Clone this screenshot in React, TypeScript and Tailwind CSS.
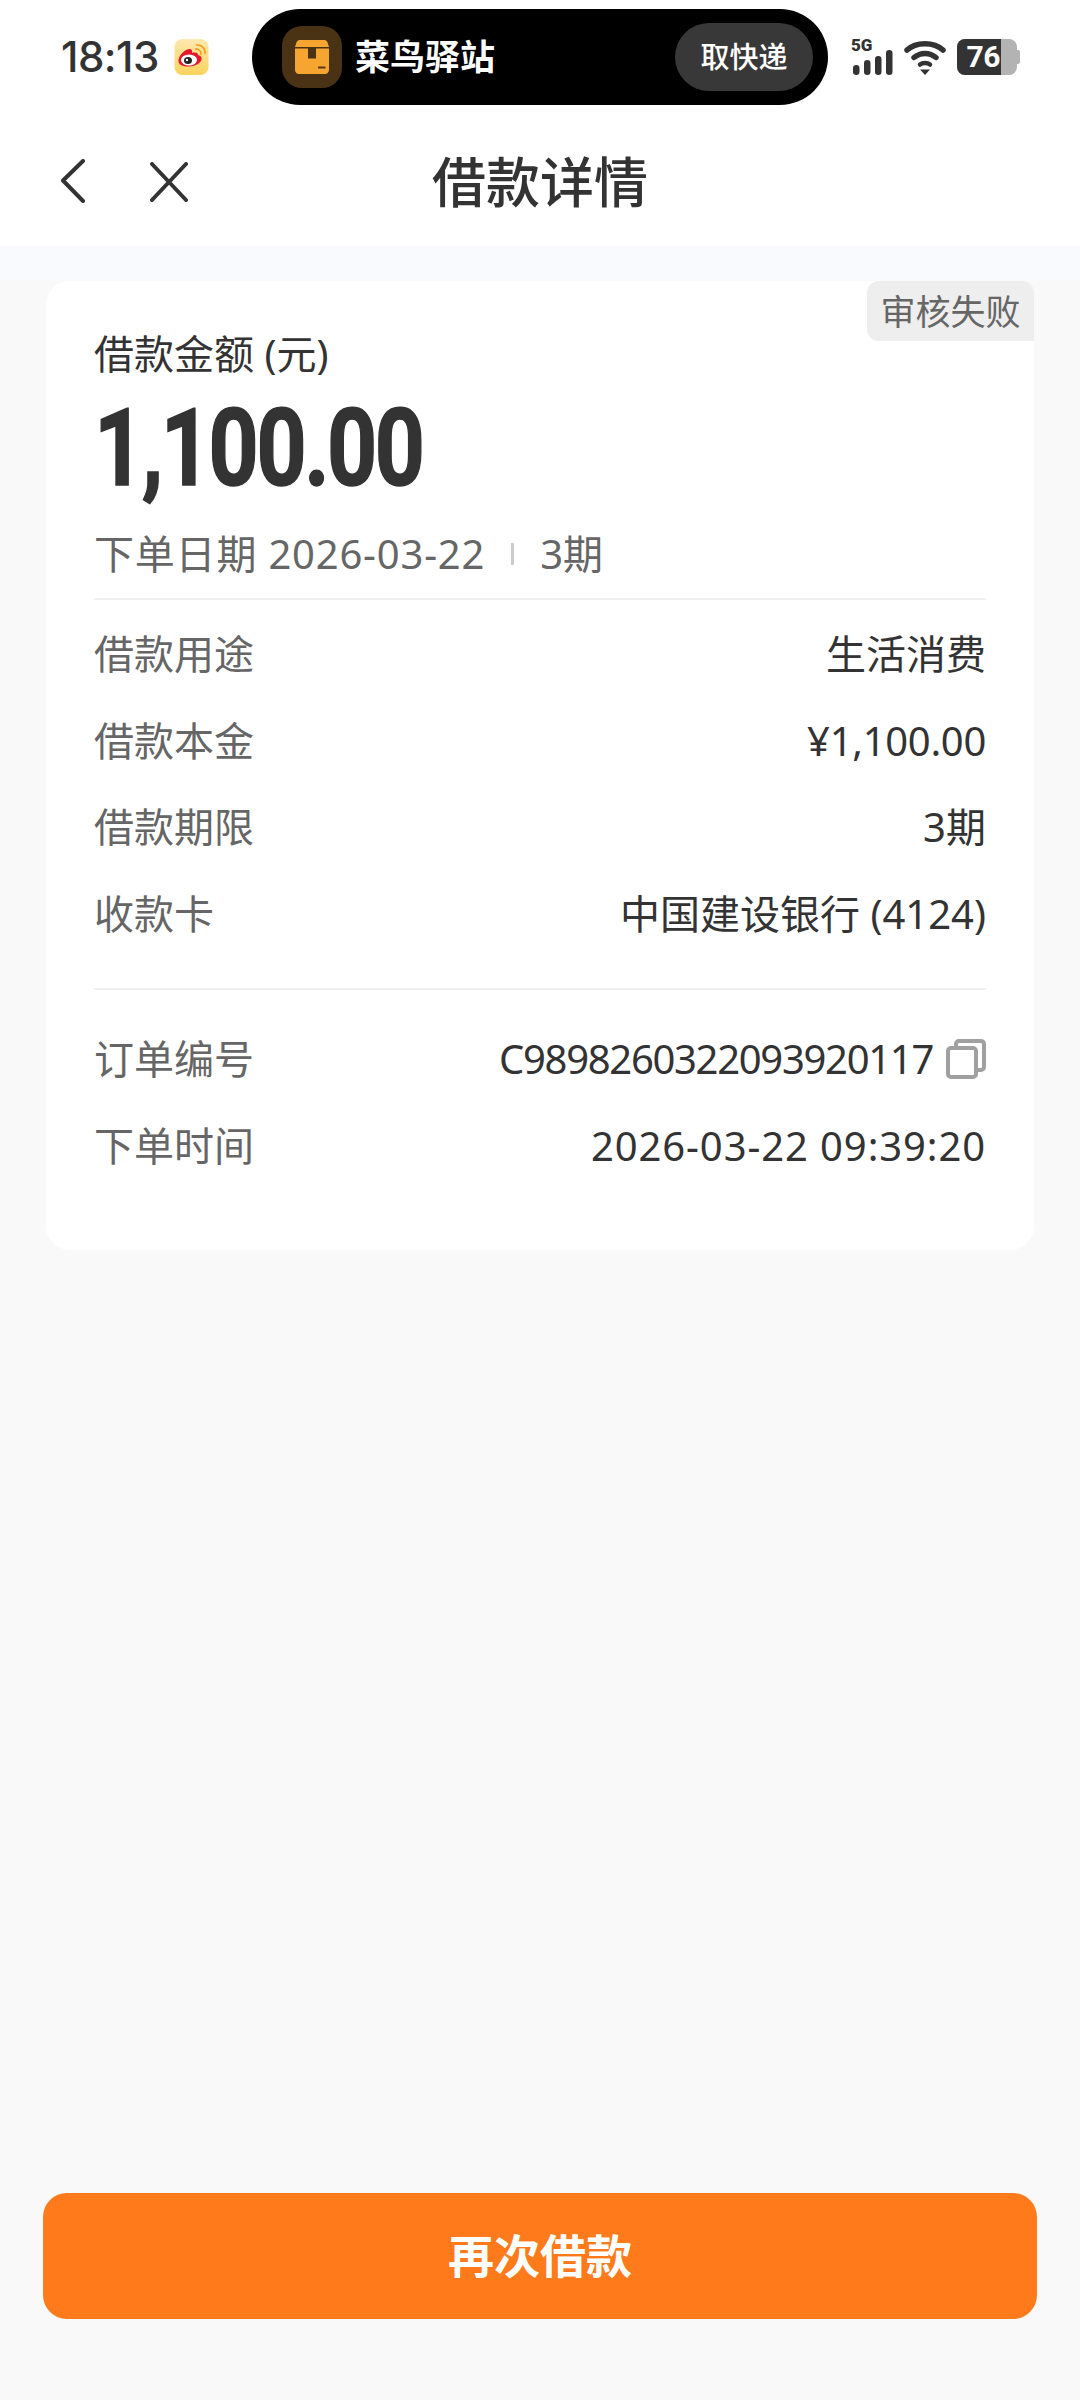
const FONT = "font-['Noto_Sans','Noto_Sans_CJK_SC',sans-serif]";

const ROWS_TOP = [
  { label: '借款用途', value: '生活消费', tracking: '' },
  { label: '借款本金', value: '¥1,100.00', tracking: 'tracking-[-0.3px]' },
  { label: '借款期限', value: '3期', tracking: '' },
  { label: '收款卡', value: '中国建设银行 (4124)', tracking: '' },
];

function WeiboIcon() {
  return (
    <svg viewBox="0 0 34 36" className="w-[35px] h-[36px]">
      <defs>
        <linearGradient id="wb" x1="0" y1="0" x2="0" y2="1">
          <stop offset="0" stopColor="#fde9b0" />
          <stop offset="1" stopColor="#fdd35c" />
        </linearGradient>
      </defs>
      <rect width="34" height="36" rx="8" fill="url(#wb)" />
      <path d="M4 22c0-6 7-12 11-12 2.500 0 3 2 2.500 4 3-1 6-.5 6 2 3 .5 4 2.500 3.500 4.500-1 4-6.500 7-12.500 7C8.500 27.500 4 26 4 22z" fill="#e6162d" />
      <ellipse cx="14.500" cy="21" rx="8" ry="5.500" fill="#fff" />
      <ellipse cx="13.500" cy="21.500" rx="4" ry="3.500" fill="#222" />
      <circle cx="12.500" cy="21" r="1.200" fill="#fff" />
      <path d="M21 10c3-.5 6 2 5.500 5.500M22 6c5-.5 9 3.500 8.500 8.500" fill="none" stroke="#f0a020" strokeWidth="1.600" strokeLinecap="round" />
    </svg>
  );
}

function ParcelIcon() {
  return (
    <svg viewBox="0 0 34 34" className="w-[34px] h-[34px]">
      <path d="M4.500 0h25c1.500 0 2.500 1 3 2.500L34 7H0l1.500-4.500C2 1 3 0 4.500 0z" fill="#f7a531" />
      <path d="M0 8.500h13V18.500h8V8.500h13V30c0 2.200-1.800 4-4 4H4c-2.200 0-4-1.800-4-4z" fill="#f7a531" />
      <rect x="23" y="26.500" width="7.500" height="2" fill="#5a3a10" />
    </svg>
  );
}

function SignalIcon() {
  return (
    <div className="relative w-[42px] h-[36px]">
      <span className="absolute left-0 top-[-3px] text-[17px] leading-[18px] font-black text-[#333] font-['Roboto',sans-serif]">5G</span>
      <svg viewBox="0 0 42 36" className="absolute inset-0 w-[42px] h-[36px]">
        <rect x="2" y="26" width="6.500" height="10" rx="3.200" fill="#333" />
        <rect x="13" y="21" width="6.500" height="15" rx="3.200" fill="#333" />
        <rect x="24" y="17" width="6.500" height="19" rx="3.200" fill="#333" />
        <rect x="35" y="11" width="6.500" height="25" rx="3.200" fill="#333" />
      </svg>
    </div>
  );
}

function WifiIcon() {
  return (
    <svg viewBox="0 0 42 36" className="w-[44px] h-[36px]">
      <path d="M3 11C12 2.500 30 2.500 39 11" fill="none" stroke="#333" strokeWidth="5.500" strokeLinecap="round" />
      <path d="M10 18.500C16.500 13 25.500 13 32 18.500" fill="none" stroke="#333" strokeWidth="5.500" strokeLinecap="round" />
      <path d="M16 25.500C18.500 23.500 23.500 23.500 26 25.500" fill="none" stroke="#333" strokeWidth="4.500" strokeLinecap="round" />
      <path d="M16 30.500h10L21 36z" fill="#333" />
    </svg>
  );
}

function Battery() {
  return (
    <div className="flex items-center">
      <div className="relative flex w-[60px] h-[36px] rounded-[8px] overflow-hidden bg-[#b3b3b3]">
        <div className="w-[44px] h-full bg-[#333] flex items-center justify-end pr-[1px]">
          <span className="text-[30px] leading-none font-bold text-white font-['Roboto',sans-serif] tracking-[-0.5px]">76</span>
        </div>
      </div>
      <div className="w-[3px] h-[14px] rounded-r-[2px] bg-[#b3b3b3]" />
    </div>
  );
}

function CopyIcon() {
  return (
    <svg viewBox="0 0 40 40" className="w-[40px] h-[40px]" fill="none" stroke="#a0a0a0" strokeWidth="4">
      <rect x="2" y="9" width="28" height="29" rx="3" />
      <path d="M10 8V5c0-1.700 1.300-3 3-3h22c1.700 0 3 1.300 3 3v23c0 1.700-1.300 3-3 3h-4" />
    </svg>
  );
}

function Row({ label, value, tracking, icon }: { label: string; value: string; tracking?: string; icon?: boolean }) {
  return (
    <div className="h-[86.500px] flex items-center justify-between">
      <span className="text-[40px] text-[#666]">{label}</span>
      <div className="flex items-center gap-[13px]">
        <span className={`text-[40px] text-[#333] ${tracking ?? ''}`}>{value}</span>
        {icon && <CopyIcon />}
      </div>
    </div>
  );
}

export default function App() {
  return (
    <div className={`${FONT} w-[1080px] min-h-[2400px] bg-[#f9f9f9] flex flex-col`}>
      {/* status bar + nav */}
      <div className="bg-white h-[246px]">
        <div className="h-[113px] flex items-center pl-[61px] pt-[1px]">
          <span className="w-[96px] text-[42px] leading-none font-medium text-[#333] tracking-[-0.5px] font-['Inter',sans-serif]">18:13</span>
          <div className="ml-[17px]"><WeiboIcon /></div>
          <div className="ml-[43px] w-[576px] h-[96px] rounded-[48px] bg-black flex items-center pl-[30px] pr-[15px]">
            <div className="w-[60px] h-[62px] rounded-[20px] bg-[#4a3214] flex items-center justify-center">
              <ParcelIcon />
            </div>
            <span className="ml-[13px] text-[35px] font-bold text-white">菜鸟驿站</span>
            <div className="ml-auto w-[138px] h-[68px] rounded-[34px] bg-[#383838] flex items-center justify-center">
              <span className="text-[29px] font-medium text-white">取快递</span>
            </div>
          </div>
          <div className="ml-[23px] flex items-center gap-[10px]">
            <SignalIcon />
            <WifiIcon />
            <Battery />
          </div>
        </div>
        <div className="relative h-[133px] flex items-center justify-center">
          <div className="absolute left-[60px] top-[46px]">
            <svg viewBox="0 0 26 44" className="w-[26px] h-[44px]" fill="none" stroke="#333" strokeWidth="4" strokeLinecap="round" strokeLinejoin="round">
              <path d="M23 2 3 21.500 23 42" />
            </svg>
          </div>
          <div className="absolute left-[150px] top-[49px]">
            <svg viewBox="0 0 38 40" className="w-[38px] h-[40px]" fill="none" stroke="#333" strokeWidth="4" strokeLinecap="round">
              <path d="M2 2 36 38M36 2 2 38" />
            </svg>
          </div>
          <span className="text-[54px] leading-none text-[#333] font-medium pt-[4px]">借款详情</span>
        </div>
      </div>
      <div className="h-[35px] bg-[#f9fafd]" />

      {/* card */}
      <div className="relative mx-[46px] h-[969px] bg-white rounded-[24px] px-[48px]">
        <div className="absolute right-0 top-0 w-[167px] h-[60px] bg-[#eeeeee] rounded-tl-[12px] rounded-bl-[12px] rounded-tr-[12px] flex items-center justify-center">
          <span className="text-[35px] leading-none text-[#666]">审核失败</span>
        </div>
        <div className="pt-[45px] text-[40px] leading-[56px] text-[#333]">借款金额 (元)</div>
        <div className="mt-[14px] h-[104px] flex items-center text-[108px] leading-none font-bold text-[#333] font-['Roboto',sans-serif] tracking-[-3px] origin-left scale-x-[0.81] [-webkit-text-stroke:1.500px_#333]">1,100.00</div>
        <div className="mt-[26px] h-[56px] flex items-center text-[40px] text-[#666]">
          <span className="tracking-[0.8px]">下单日期 2026-03-22</span>
          <span className="mx-[26px] w-[3px] h-[22px] bg-[#ccc]" />
          <span>3期</span>
        </div>
        <div className="mt-[16px] h-[2px] bg-[#f0f0f0]" />
        <div className="pt-[11px]">
          {ROWS_TOP.map((r) => <Row key={r.label} label={r.label} value={r.value} tracking={r.tracking} />)}
        </div>
        <div className="mt-[31px] h-[2px] bg-[#f0f0f0]" />
        <div className="pt-[26px]">
          <Row label="订单编号" value="C9898260322093920117" tracking="tracking-[-1.3px]" icon />
          <Row label="下单时间" value="2026-03-22 09:39:20" tracking="tracking-[0.9px]" />
        </div>
      </div>

      {/* bottom */}
      <div className="mt-auto mx-[43px] mb-[81px] h-[126px] rounded-[24px] bg-[#ff7a1a] flex items-center justify-center">
        <span className="text-[46px] font-bold text-white -mt-[2px]">再次借款</span>
      </div>
    </div>
  );
}
